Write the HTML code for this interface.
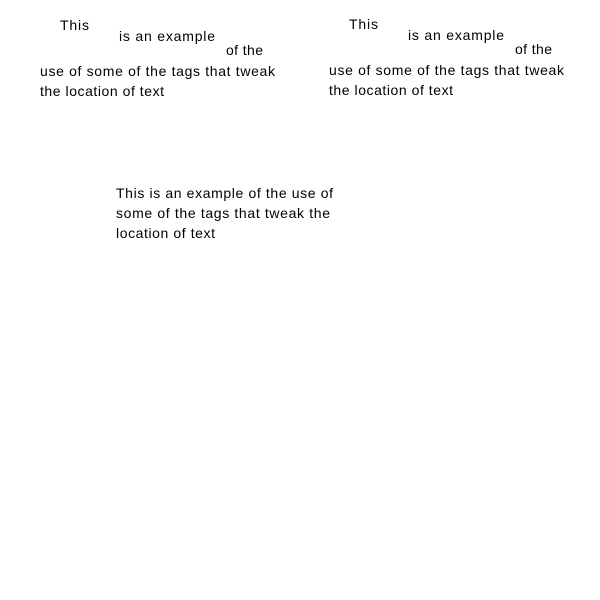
<!DOCTYPE html>
<html><head><style>html,body{margin:0;background:#fff;}svg{display:block}</style></head>
<body>
<svg width="600" height="600" xmlns="http://www.w3.org/2000/svg" font-family="Liberation Sans, Arial, sans-serif" font-size="14" fill="#000">
<text x="60" y="30" textLength="29" lengthAdjust="spacing">This</text>
<text x="119" y="41" textLength="96" lengthAdjust="spacing">is an example</text>
<text x="226" y="55" textLength="37" lengthAdjust="spacing">of the</text>
<text x="40" y="76" textLength="235" lengthAdjust="spacing">use of some of the tags that tweak</text>
<text x="40" y="96" textLength="124" lengthAdjust="spacing">the location of text</text>
<text x="349" y="29" textLength="29" lengthAdjust="spacing">This</text>
<text x="408" y="40" textLength="96" lengthAdjust="spacing">is an example</text>
<text x="515" y="54" textLength="37" lengthAdjust="spacing">of the</text>
<text x="329" y="75" textLength="235" lengthAdjust="spacing">use of some of the tags that tweak</text>
<text x="329" y="95" textLength="124" lengthAdjust="spacing">the location of text</text>
<text x="116" y="198" textLength="217" lengthAdjust="spacing">This is an example of the use of</text>
<text x="116" y="218" textLength="214" lengthAdjust="spacing">some of the tags that tweak the</text>
<text x="116" y="238" textLength="99" lengthAdjust="spacing">location of text</text>
</svg>
</body></html>
